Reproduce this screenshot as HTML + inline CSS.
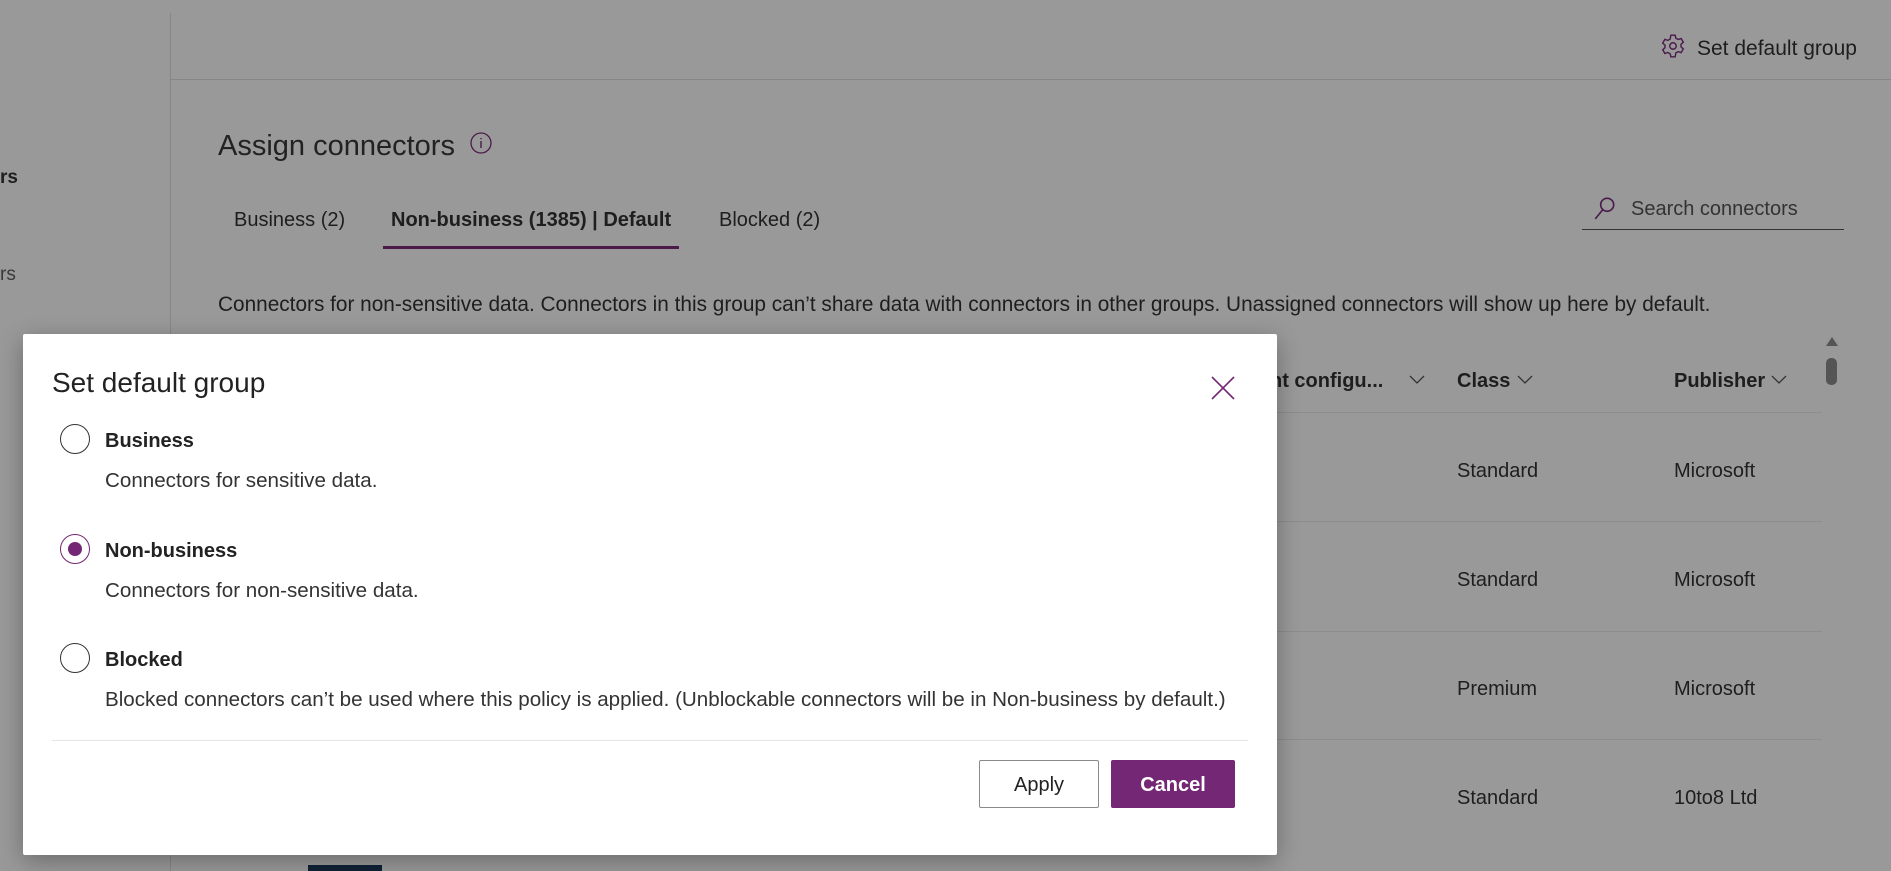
<!DOCTYPE html>
<html><head><meta charset="utf-8"><style>
*{margin:0;padding:0;box-sizing:border-box}
body{width:1891px;height:871px;overflow:hidden;background:#999;font-family:"Liberation Sans",sans-serif;color:#1e1e1e;position:relative}
.a{position:absolute;white-space:nowrap}
.t{margin-top:3px}
.hl{position:absolute;background:#878787}
</style></head><body>
<div class="hl" style="left:170px;top:13px;width:1px;height:858px"></div>
<div class="hl" style="left:170px;top:79px;width:1721px;height:1px"></div>
<div class="a t" style="left:0;top:164px;font-size:19px;font-weight:bold">rs</div>
<div class="a t" style="left:0;top:261px;font-size:19px;color:#3a3a3a">rs</div>
<svg class="a" style="left:1660px;top:33px" width="26" height="26" viewBox="0 0 24 24" fill="none" stroke="#4a1a4a" stroke-width="1.3"><circle cx="12" cy="12" r="3"/><path d="M10 2h4l.6 2.8 2.2 1.2 2.7-.9 2 3.4-2.1 1.9v2.4l2.1 1.9-2 3.4-2.7-.9-2.2 1.2L14 22h-4l-.6-2.8-2.2-1.2-2.7.9-2-3.4 2.1-1.9v-2.4L2.5 9.3l2-3.4 2.7.9 2.2-1.2z"/></svg>
<div class="a t" style="left:1697px;top:34px;font-size:21px">Set default group</div>
<div class="a t" style="left:218px;top:127px;font-size:29px;color:#222">Assign connectors</div>
<svg class="a" style="left:469px;top:131px" width="24" height="24" viewBox="0 0 24 24"><circle cx="12" cy="12" r="10" fill="none" stroke="#4a1a4a" stroke-width="1.3"/><path d="M12 10v7M12 7v1.2" stroke="#4a1a4a" stroke-width="1.4"/></svg>
<div class="a t" style="left:234px;top:206px;font-size:20px">Business (2)</div>
<div class="a t" style="left:391px;top:206px;font-size:20px;font-weight:bold">Non-business (1385) | Default</div>
<div class="a t" style="left:719px;top:206px;font-size:20px">Blocked (2)</div>
<div class="a" style="left:383px;top:246px;width:296px;height:3px;background:#4b1a4b"></div>
<svg class="a" style="left:1592px;top:195px" width="26" height="26" viewBox="0 0 24 24" fill="none" stroke="#4a1a4a" stroke-width="1.5"><circle cx="14" cy="9" r="6"/><path d="M10 13.5L3 22"/></svg>
<div class="a t" style="left:1631px;top:195px;font-size:20px;color:#333">Search connectors</div>
<div class="a" style="left:1582px;top:229px;width:262px;height:1px;background:#333"></div>
<div class="a t" style="left:218px;top:290px;font-size:20.8px">Connectors for non-sensitive data. Connectors in this group can’t share data with connectors in other groups. Unassigned connectors will show up here by default.</div>
<div class="a t" style="left:1270px;top:367px;font-size:20px;font-weight:bold">nt configu...</div>
<div class="a t" style="left:1457px;top:367px;font-size:20px;font-weight:bold">Class</div>
<div class="a t" style="left:1674px;top:367px;font-size:20px;font-weight:bold">Publisher</div>
<svg class="a" style="left:1408px;top:374px" width="18" height="12"><path d="M2 2l7 7 7-7" fill="none" stroke="#333" stroke-width="1.3"/></svg>
<svg class="a" style="left:1516px;top:374px" width="18" height="12"><path d="M2 2l7 7 7-7" fill="none" stroke="#333" stroke-width="1.3"/></svg>
<svg class="a" style="left:1770px;top:374px" width="18" height="12"><path d="M2 2l7 7 7-7" fill="none" stroke="#333" stroke-width="1.3"/></svg>
<div class="hl" style="left:170px;top:412px;width:1652px;height:1px;background:#8d8d8d"></div>
<div class="hl" style="left:170px;top:521px;width:1652px;height:1px;background:#8d8d8d"></div>
<div class="hl" style="left:170px;top:631px;width:1652px;height:1px;background:#8d8d8d"></div>
<div class="hl" style="left:170px;top:739px;width:1652px;height:1px;background:#8d8d8d"></div>
<div class="a t" style="left:1457px;top:457px;font-size:20px">Standard</div><div class="a t" style="left:1674px;top:457px;font-size:20px">Microsoft</div>
<div class="a t" style="left:1457px;top:566px;font-size:20px">Standard</div><div class="a t" style="left:1674px;top:566px;font-size:20px">Microsoft</div>
<div class="a t" style="left:1457px;top:675px;font-size:20px">Premium</div><div class="a t" style="left:1674px;top:675px;font-size:20px">Microsoft</div>
<div class="a t" style="left:1457px;top:784px;font-size:20px">Standard</div><div class="a t" style="left:1674px;top:784px;font-size:20px">10to8 Ltd</div>
<svg class="a" style="left:1824px;top:335px" width="16" height="12"><path d="M2 11L8 2l6 9z" fill="#555"/></svg>
<div class="a" style="left:1826px;top:358px;width:11px;height:27px;border-radius:5px;background:#555"></div>
<div class="a" style="left:308px;top:865px;width:74px;height:6px;background:#0f2236"></div>

<div class="a" style="left:23px;top:334px;width:1254px;height:521px;background:#fff;border-radius:2px;box-shadow:0 6px 24px rgba(0,0,0,.3)">
 <div class="a t" style="left:29px;top:30px;font-size:28px;color:#222">Set default group</div>
 <svg class="a" style="left:1188px;top:42px" width="24" height="24"><path d="M1 1l22 22M23 1L1 23" stroke="#742774" stroke-width="1.6"/></svg>
 <div class="a" style="left:37px;top:90px;width:30px;height:30px;border-radius:50%;border:1.5px solid #333"></div>
 <div class="a t" style="left:82px;top:93px;font-size:20px;font-weight:bold;color:#222">Business</div>
 <div class="a t" style="left:82px;top:132px;font-size:20.6px;color:#333">Connectors for sensitive data.</div>
 <div class="a" style="left:37px;top:200px;width:30px;height:30px;border-radius:50%;border:1.5px solid #742774"></div>
 <div class="a" style="left:45px;top:208px;width:14px;height:14px;border-radius:50%;background:#742774"></div>
 <div class="a t" style="left:82px;top:203px;font-size:20px;font-weight:bold;color:#222">Non-business</div>
 <div class="a t" style="left:82px;top:242px;font-size:20.6px;color:#333">Connectors for non-sensitive data.</div>
 <div class="a" style="left:37px;top:309px;width:30px;height:30px;border-radius:50%;border:1.5px solid #333"></div>
 <div class="a t" style="left:82px;top:312px;font-size:20px;font-weight:bold;color:#222">Blocked</div>
 <div class="a t" style="left:82px;top:351px;font-size:20.6px;color:#333">Blocked connectors can’t be used where this policy is applied. (Unblockable connectors will be in Non-business by default.)</div>
 <div class="a" style="left:29px;top:406px;width:1196px;height:1px;background:#e6e6e6"></div>
 <div class="a" style="left:956px;top:426px;width:120px;height:48px;border:1px solid #8a8a8a;border-radius:2px;font-size:20px;text-align:center;line-height:48px;color:#222">Apply</div>
 <div class="a" style="left:1088px;top:426px;width:124px;height:48px;background:#742774;border-radius:2px;font-size:20px;font-weight:bold;text-align:center;line-height:50px;color:#fff">Cancel</div>
</div>
</body></html>
